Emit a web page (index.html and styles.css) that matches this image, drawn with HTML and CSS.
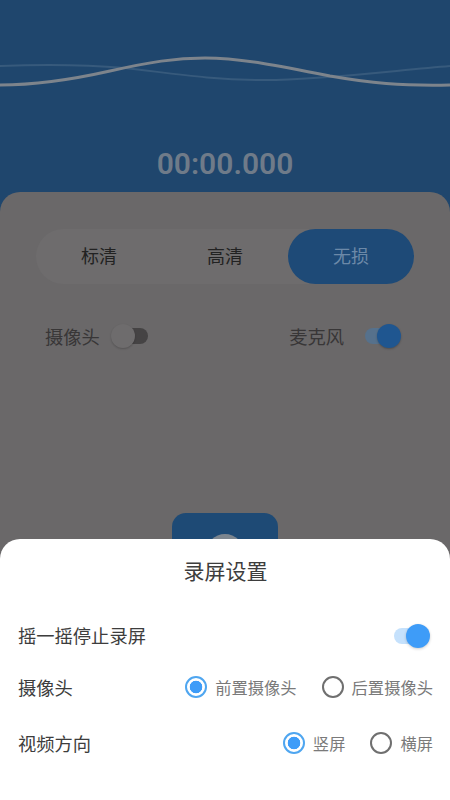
FILE: index.html
```html
<!DOCTYPE html>
<html lang="zh">
<head>
<meta charset="utf-8">
<title>录屏设置</title>
<link rel="stylesheet" href="styles.css">
</head>
<body>
<div class="screen">
  <header class="hero">
    <svg class="wave" viewBox="0 0 450 40" width="450" height="40" aria-hidden="true">
      <path class="wave-back" d="M0 10C50 8 90 9 125 12C170 17 210 24 265 24C320 24 390 15 450 10"/>
      <path class="wave-front" d="M0 29C30 29 70 24 110 15C150 6 175 2 205 2C240 2 280 10 330 20C370 27 400 30 450 29"/>
    </svg>
    <div class="timer">00:00.000</div>
  </header>
  <main class="panel">
    <div class="segments">
      <div class="segment">标清</div>
      <div class="segment">高清</div>
      <div class="segment segment-active">无损</div>
    </div>
    <div class="toggles">
      <div class="toggle-item">
        <span>摄像头</span>
        <span class="switch switch-off-dim"><i class="track"></i><i class="thumb"></i></span>
      </div>
      <div class="toggle-item">
        <span>麦克风</span>
        <span class="switch switch-on-dim"><i class="track"></i><i class="thumb"></i></span>
      </div>
    </div>
    <div class="record-wrap">
      <div class="record"><i class="record-dot"></i></div>
    </div>
  </main>
  <section class="sheet">
    <h1 class="sheet-title">录屏设置</h1>
    <div class="row row-shake">
      <span>摇一摇停止录屏</span>
      <span class="switch switch-on"><i class="track"></i><i class="thumb"></i></span>
    </div>
    <div class="row row-camera">
      <span>摄像头</span>
      <div class="options">
        <label class="option"><i class="radio radio-on"></i>前置摄像头</label>
        <label class="option"><i class="radio"></i>后置摄像头</label>
      </div>
    </div>
    <div class="row row-orient">
      <span>视频方向</span>
      <div class="options">
        <label class="option"><i class="radio radio-on"></i>竖屏</label>
        <label class="option"><i class="radio"></i>横屏</label>
      </div>
    </div>
  </section>
</div>
</body>
</html>
```
FILE: styles.css
```css
* { box-sizing: border-box; }
html, body { margin: 0; padding: 0; }
body { font-family: "Noto Sans CJK SC", "Noto Sans", sans-serif; }
.screen {
  position: relative;
  width: 450px;
  height: 800px;
  overflow: hidden;
  background: #1f466d;
  display: flex;
  flex-direction: column;
}
.hero {
  height: 192px;
  padding-top: 56px;
  display: flex;
  flex-direction: column;
  align-items: center;
  flex: none;
}
.wave { display: block; flex: none; }
.wave path { fill: none; }
.wave-back { stroke: #375a7c; stroke-width: 2; }
.wave-front { stroke: #7d848c; stroke-width: 3; }
.timer {
  margin-top: 48px;
  font: 600 30px/40px Roboto, sans-serif;
  color: #6f7b89;
}
.panel {
  flex: 1;
  background: #6a6869;
  border-radius: 20px 20px 0 0;
  padding: 37px 36px 0;
}
.segments {
  display: flex;
  height: 55px;
  background: #6e6c6d;
  border-radius: 28px;
}
.segment {
  width: 126px;
  display: flex;
  align-items: center;
  justify-content: center;
  padding-bottom: 3px;
  font-size: 18px;
  color: #222;
  border-radius: 28px;
}
.segment-active { background: #1e4a77; color: #6c89a8; }
.toggles {
  display: flex;
  justify-content: space-between;
  margin-top: 37px;
  padding: 0 13px 0 9px;
}
.toggle-item {
  display: flex;
  align-items: center;
  gap: 10px;
  font-size: 18.3px;
  color: #383637;
  height: 30px;
}
.toggle-item + .toggle-item { gap: 19px; }
.switch {
  position: relative;
  display: block;
  width: 38px;
  height: 24px;
}
.track {
  position: absolute;
  left: 2px;
  right: 0;
  top: 4px;
  height: 16px;
  border-radius: 8px;
}
.thumb {
  position: absolute;
  top: 0;
  width: 24px;
  height: 24px;
  border-radius: 50%;
}
.switch-off-dim .track { background: #454344; }
.switch-off-dim .thumb { left: 1px; background: #6e6c6d; box-shadow: 0 1px 2px rgba(0,0,0,.2); }
.switch-on-dim .track { background: #56718c; right: 2px; }
.switch-on-dim .thumb { right: 0; background: #1f5690; box-shadow: 0 1px 2px rgba(0,0,0,.25); }
.switch-on { margin: 2px -1px 0 0; }
.switch-on .track { background: #c5e1fc; right: 2px; }
.switch-on .thumb { right: 0; background: #3e9cf8; box-shadow: 0 1px 3px rgba(0,0,0,.2); }
.record-wrap {
  display: flex;
  justify-content: center;
  margin-top: 162px;
}
.record {
  width: 106px;
  height: 80px;
  background: #1e4a75;
  border-radius: 14px;
  padding-top: 21px;
  display: flex;
  justify-content: center;
  flex: none;
}
.record-dot {
  display: block;
  width: 38px;
  height: 38px;
  border-radius: 50%;
  background: #7d868f;
}
.sheet {
  position: absolute;
  left: 0;
  right: 0;
  bottom: 0;
  height: 261px;
  background: #fff;
  border-radius: 20px 20px 0 0;
  padding: 0 17px 0 18px;
  color: #3d3d3d;
}
.sheet-title {
  margin: 0;
  height: 62px;
  display: flex;
  align-items: center;
  justify-content: center;
  font-size: 21px;
  font-weight: 400;
}
.row {
  display: flex;
  align-items: center;
  justify-content: space-between;
  font-size: 18.3px;
  height: 30px;
}
.row-shake { margin-top: 19px; padding-right: 4px; }
.row-camera { margin-top: 22px; }
.row-orient { margin-top: 26px; }
.options { display: flex; gap: 25px; }
.option {
  display: flex;
  align-items: center;
  gap: 8px;
  font-size: 16.3px;
  color: #7a7a7a;
}
.radio {
  display: block;
  width: 22px;
  height: 22px;
  border: 2.5px solid #6f6f6f;
  border-radius: 50%;
  background: #fff;
}
.radio-on {
  border-color: #4fa6f0;
  background: radial-gradient(circle, #3e9cf8 0 6px, #fff 6.6px);
}
```
